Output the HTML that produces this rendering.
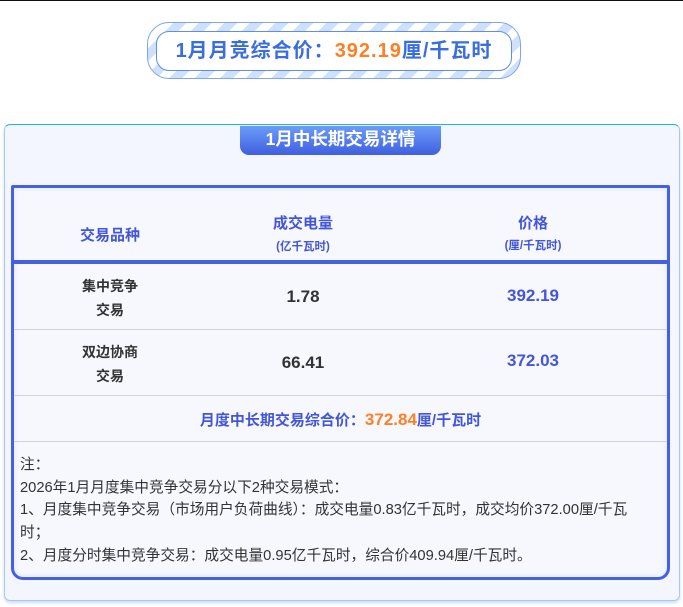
<!DOCTYPE html>
<html><head><meta charset="utf-8"><style>
*{margin:0;padding:0;box-sizing:border-box}
body{width:683px;height:607px;background:#fff;font-family:"Liberation Sans","Noto Sans CJK SC",sans-serif;position:relative;overflow:hidden}
.topline{position:absolute;left:0;top:0;width:683px;height:1px;background:#111}
.ban{position:absolute;left:147px;top:22px;width:374px;height:57px;border-radius:22px;border:1px solid #7aa6f2;
background:repeating-linear-gradient(135deg,#cfe0fb 0 9px,#fff 9px 18px)}
.ban .in{position:absolute;left:8px;top:8px;right:8px;bottom:7px;background:#fff;border:1px solid #5b8ef0;border-radius:13px;
text-align:center;line-height:38px;font-size:20px;font-weight:bold;color:#3a6ee0;letter-spacing:1px}
.or{color:#ff7f24}
.card{position:absolute;left:4px;top:124px;width:676px;height:477px;background:#f3f6fe;border:1px solid #a9c6f5;border-top:1px solid #19b4ea;border-radius:6px;box-shadow:0 2px 3px #cfdcf5}
.tab{position:absolute;left:240px;top:126px;width:201px;height:29px;background:linear-gradient(#6c9cf8,#3f5fe0);border-radius:0 0 9px 9px;color:#fff;font-weight:bold;font-size:17.5px;text-align:center;line-height:27px}
.tbl{position:absolute;left:11px;top:185px;width:659px;height:395px;border:3px solid #4560e0;border-radius:2px 2px 12px 12px;background:#f6f8fe;box-shadow:inset 0 0 6px #dde5fa}
.c{position:absolute;text-align:center;font-weight:bold}
.h{color:#4456d8;font-size:15px}
.s{font-size:11.5px}
.bar{position:absolute;left:0;width:653px;height:4px;background:#4560e0;top:72px}
.ln{position:absolute;left:0;width:653px;height:1px;background:#cfd3dc}
.dk{color:#333;font-size:14px;line-height:24px}
.num{font-size:17px;color:#333}
.bl{color:#4456d8}
.notes{position:absolute;left:6px;top:266px;font-size:14.7px;color:#333;line-height:22.7px;width:630px}
</style></head><body>
<div class="topline"></div>
<div class="ban"><div class="in">1月月竞综合价：<span class="or">392.19</span>厘/千瓦时</div></div>
<div class="card"></div>
<div class="tab">1月中长期交易详情</div>
<div class="tbl">
<div class="c h" style="left:36px;width:120px;top:36px">交易品种</div>
<div class="c h" style="left:229px;width:120px;top:24px">成交电量</div>
<div class="c h s" style="left:229px;width:120px;top:50px">(亿千瓦时)</div>
<div class="c h" style="left:459px;width:120px;top:24px">价格</div>
<div class="c h s" style="left:459px;width:120px;top:49px">(厘/千瓦时)</div>
<div class="bar"></div>
<div class="c dk" style="left:36px;width:120px;top:86px">集中竞争<br>交易</div>
<div class="c num" style="left:229px;width:120px;top:99px">1.78</div>
<div class="c num bl" style="left:459px;width:120px;top:98px">392.19</div>
<div class="ln" style="top:141px"></div>
<div class="c dk" style="left:36px;width:120px;top:152px">双边协商<br>交易</div>
<div class="c num" style="left:229px;width:120px;top:165px">66.41</div>
<div class="c num bl" style="left:459px;width:120px;top:163px">372.03</div>
<div class="ln" style="top:207px"></div>
<div class="c bl" style="left:0;width:653px;top:221px;font-size:15px">月度中长期交易综合价：<span class="or" style="font-size:17px">372.84</span>厘/千瓦时</div>
<div class="ln" style="top:253px"></div>
<div class="notes">注：<br>2026年1月月度集中竞争交易分以下2种交易模式：<br>1、月度集中竞争交易（市场用户负荷曲线）：成交电量0.83亿千瓦时，成交均价372.00厘/千瓦时；<br>2、月度分时集中竞争交易：成交电量0.95亿千瓦时，综合价409.94厘/千瓦时。</div>
</div>
</body></html>
